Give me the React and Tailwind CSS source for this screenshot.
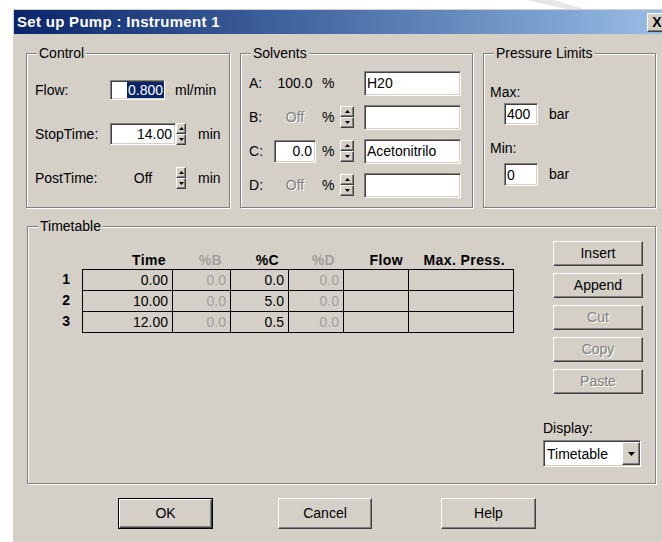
const raised =
  "border border-t-white border-l-white border-r-[#404040] border-b-[#404040] shadow-[inset_-1px_-1px_0_#808080] bg-[#d4d0c8]";
const sunken =
  "border border-t-[#808080] border-l-[#808080] border-r-white border-b-white shadow-[inset_1px_1px_0_#404040,inset_-1px_-1px_0_#d4d0c8] bg-white";
const disabled = "text-[#808080] [text-shadow:1px_1px_0_#fff]";

function Group({ title, className, children }) {
  return (
    <div className={`relative flex-none border border-[#808080] shadow-[inset_1px_1px_0_#fff,1px_1px_0_#fff] ${className}`}>
      <span className="absolute -top-[9px] left-[10px] bg-[#d4d0c8] px-[2px] leading-[16px]">{title}</span>
      {children}
    </div>
  );
}

function Arrow({ down }) {
  return (
    <svg width="5" height="3" viewBox="0 0 5 3">
      <path d={down ? "M0 0H5L2.5 3z" : "M2.5 0L5 3H0z"} fill="#000" />
    </svg>
  );
}

function Spin({ className = "w-[14px]" }) {
  return (
    <div className={`flex h-[22px] flex-none flex-col ${className}`}>
      <div className={`flex flex-1 items-center justify-center ${raised}`}>
        <Arrow />
      </div>
      <div className={`flex flex-1 items-center justify-center ${raised}`}>
        <Arrow down />
      </div>
    </div>
  );
}

function Button({ children, off, className }) {
  return (
    <div className={`flex flex-none items-center justify-center ${raised} ${off ? disabled : ""} ${className}`}>
      {children}
    </div>
  );
}

function Field({ children, className }) {
  return (
    <div className={`flex flex-none items-center leading-[16px] ${sunken} ${className}`}>{children}</div>
  );
}

function SolventRow({ letter, value, editable, spin, name, off }) {
  return (
    <div className="flex h-[26px] items-center">
      <span className="w-[25px] flex-none">{letter}:</span>
      {editable ? (
        <Field className="h-[23px] w-[42px] justify-end pr-[3px]">{value}</Field>
      ) : (
        <span className={`w-[42px] flex-none text-center ${off ? disabled : ""}`}>{value}</span>
      )}
      <span className="ml-[6px] w-[18px] flex-none">%</span>
      {spin ? <Spin className="w-[14px]" /> : <div className="w-[14px] flex-none" />}
      <Field className="ml-[10px] h-[25px] w-[97px] pl-[2px]">{name}</Field>
    </div>
  );
}

const columns = [
  { head: "Time", w: "w-[90px]", hp: "pr-[6px]" },
  { head: "%B", w: "w-[58px]", hp: "pr-[8px]", off: true },
  { head: "%C", w: "w-[58px]", hp: "pr-[9px]" },
  { head: "%D", w: "w-[55px]", hp: "pr-[8px]", off: true },
  { head: "Flow", w: "w-[65px]", hp: "pr-[5px]" },
  { head: "Max. Press.", w: "w-[106px]", hp: "pr-[9px]" },
];

const rows = [
  ["1", "0.00", "0.0", "0.0", "0.0", "", ""],
  ["2", "10.00", "0.0", "5.0", "0.0", "", ""],
  ["3", "12.00", "0.0", "0.5", "0.0", "", ""],
];

function Timetable() {
  return (
    <div className="w-[515px] flex-none pt-[24px]">
      <div className="flex h-[18px] items-center font-bold tracking-[0.4px]">
        <div className="w-[54px] flex-none" />
        {columns.map((c) => (
          <div key={c.head} className={`flex-none text-right ${c.w} ${c.hp} ${c.off ? "text-[#a0a0a0]" : ""}`}>
            {c.head}
          </div>
        ))}
      </div>
      {rows.map((r, ri) => {
        const last = ri === rows.length - 1;
        return (
          <div key={r[0]} className="flex">
            <div className="w-[54px] flex-none pr-[12px] text-right font-bold leading-[21px]">{r[0]}</div>
            {columns.map((c, ci) => (
              <div
                key={c.head}
                className={`flex-none border-l border-t border-black pr-[4px] text-right leading-[20px] ${c.w} ${
                  ci === columns.length - 1 ? "border-r" : ""
                } ${last ? "h-[22px] border-b" : "h-[21px]"} ${c.off ? "text-[#a0a0a0]" : ""}`}
              >
                {r[ci + 1]}
              </div>
            ))}
          </div>
        );
      })}
    </div>
  );
}

export default function App() {
  return (
    <div className="relative h-[542px] w-[662px] overflow-hidden bg-white pl-[13px] pt-[9px] font-['Liberation_Sans',Arial,sans-serif] text-[14px] text-black">
      {/* faint mark along the top edge */}
      <svg className="absolute left-0 top-0" width="662" height="10">
        <polygon points="527,0 553,0 584,9 566,9" fill="#e6e6e6" />
      </svg>

      <div className="h-[600px] w-[700px] border-l border-t border-[#d4d0c8] bg-[#d4d0c8]">
        {/* title bar */}
        <div className="flex h-[24px] items-center bg-gradient-to-r from-[#0a246a] to-[#a6caf0]">
          <div className="w-[633px] flex-none pl-[3px] text-[15px] font-bold tracking-[0.3px] text-white">
            Set up Pump : Instrument 1
          </div>
          <div className={`flex h-[19px] w-[20px] items-center justify-center text-[14px] font-bold ${raised}`}>X</div>
        </div>

        <div className="pl-[12px] pt-[19px]">
          <div className="flex">
            <Group title="Control" className="h-[155px] w-[204px]">
              <div className="flex flex-col gap-[22px] pl-[8px] pt-[25px]">
                <div className="flex h-[22px] items-center">
                  <span className="w-[75px] flex-none">Flow:</span>
                  <Field className="h-[20px] w-[55px] justify-end">
                    <span className="bg-[#0a246a] px-[1px] text-white">0.800</span>
                  </Field>
                  <span className="ml-[10px]">ml/min</span>
                </div>
                <div className="flex h-[22px] items-center">
                  <span className="w-[75px] flex-none">StopTime:</span>
                  <Field className="h-[22px] w-[66px] justify-end pr-[3px]">14.00</Field>
                  <Spin className="w-[10px]" />
                  <span className="ml-[12px]">min</span>
                </div>
                <div className="flex h-[22px] items-center">
                  <span className="w-[75px] flex-none">PostTime:</span>
                  <span className="w-[66px] flex-none text-center">Off</span>
                  <Spin className="w-[10px]" />
                  <span className="ml-[12px]">min</span>
                </div>
              </div>
            </Group>

            <Group title="Solvents" className="ml-[10px] h-[155px] w-[233px]">
              <div className="flex flex-col gap-[8px] pl-[8px] pt-[16px]">
                <SolventRow letter="A" value="100.0" name="H20" />
                <SolventRow letter="B" value="Off" off spin name="" />
                <SolventRow letter="C" value="0.0" editable spin name="Acetonitrilo" />
                <SolventRow letter="D" value="Off" off spin name="" />
              </div>
            </Group>

            <Group title="Pressure Limits" className="ml-[10px] h-[155px] w-[173px]">
              <div className="flex flex-col pl-[6px] pt-[30px]">
                <span className="leading-[16px]">Max:</span>
                <div className="mt-[3px] flex h-[22px] items-center pl-[14px]">
                  <Field className="h-[22px] w-[34px] pl-[2px]">400</Field>
                  <span className="ml-[11px]">bar</span>
                </div>
                <span className="mt-[15px] leading-[16px]">Min:</span>
                <div className="mt-[7px] flex h-[23px] items-center pl-[14px]">
                  <Field className="h-[23px] w-[34px] pl-[2px]">0</Field>
                  <span className="ml-[11px]">bar</span>
                </div>
              </div>
            </Group>
          </div>

          <Group title="Timetable" className="ml-[1px] mt-[18px] flex h-[258px] w-[629px]">
            <Timetable />
            <div className="flex w-[98px] flex-none flex-col pt-[14px]">
              <div className="ml-[10px] flex flex-col gap-[7px]">
                <Button className="h-[25px] w-[90px]">Insert</Button>
                <Button className="h-[25px] w-[90px]">Append</Button>
                <Button off className="h-[25px] w-[90px]">Cut</Button>
                <Button off className="h-[25px] w-[90px]">Copy</Button>
                <Button off className="h-[25px] w-[90px]">Paste</Button>
              </div>
              <span className="mt-[26px] leading-[16px]">Display:</span>
              <Field className="mt-[4px] h-[27px] w-[98px] justify-between pl-[3px]">
                <span>Timetable</span>
                <div className={`flex h-[23px] w-[18px] items-center justify-center ${raised}`}>
                  <svg width="7" height="4" viewBox="0 0 7 4">
                    <path d="M0 0H7L3.5 4z" fill="#000" />
                  </svg>
                </div>
              </Field>
            </div>
          </Group>

          <div className="mt-[14px] flex">
            <div className="ml-[92px] flex-none border border-black">
              <Button className="h-[29px] w-[93px]">OK</Button>
            </div>
            <Button className="ml-[65px] h-[31px] w-[94px]">Cancel</Button>
            <Button className="ml-[69px] h-[31px] w-[95px]">Help</Button>
          </div>
        </div>
      </div>
    </div>
  );
}
